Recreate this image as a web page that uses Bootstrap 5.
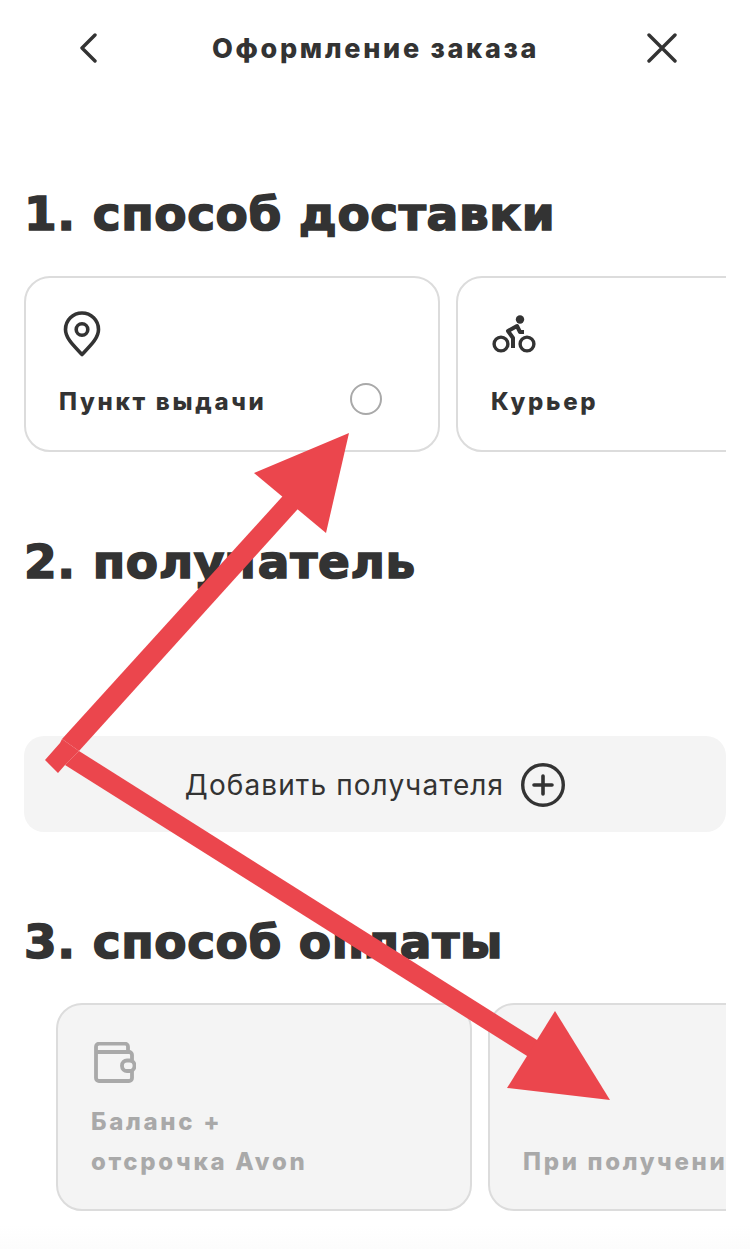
<!DOCTYPE html>
<html lang="ru">

<head>
    <meta charset="UTF-8">
    <meta name="viewport" content="width=device-width, initial-scale=1.0">
    <title>Оформление заказа</title>
    <link href="https://cdn.jsdelivr.net/npm/bootstrap@5.3.0/dist/css/bootstrap.min.css" rel="stylesheet">
    <style>
        html, body {
            height: 100%;
        }

        body {
            font-family: Inter, "Noto Sans", sans-serif;
            color: #333;
            background: #fff;
            overflow: hidden;
        }

        .page-wrap {
            position: relative;
            height: 1249px;
            padding: 0 24px;
            overflow: hidden;
        }

        .top-bar {
            height: 96px;
            padding: 0 48px 0 55px;
        }

        .top-title {
            font-size: 27px;
            font-weight: 800;
            line-height: 1;
            letter-spacing: 2.7px;
            margin-left: 6px;
        }

        .step-title {
            font-family: "DejaVu Sans", sans-serif;
            font-size: 47px;
            font-weight: 700;
            line-height: 56px;
            margin: 0;
            letter-spacing: .6px;
            -webkit-text-stroke: 1.6px #333;
        }

        .step-one {
            margin-top: 90px;
        }

        .step-two {
            margin-top: 82px;
        }

        .step-three {
            margin-top: 82px;
        }

        .card-row {
            gap: 16px;
            margin-top: 34px;
            overflow: hidden;
        }

        .pay-row {
            padding-left: 32px;
            margin-top: 33px;
        }

        .option-box {
            flex: 0 0 416px;
            height: 176px;
            border: 2px solid #dcdcdc;
            border-radius: 26px;
            padding: 32px 33px 0;
            position: relative;
        }

        .pay-row .option-box {
            height: 208px;
            background: #f4f4f4;
            color: #a9a9a9;
        }

        .option-label {
            font-size: 24px;
            font-weight: 800;
            line-height: 40px;
            letter-spacing: 2.7px;
            white-space: nowrap;
        }

        .radio-ring {
            position: absolute;
            right: 56px;
            top: 105px;
            width: 32px;
            height: 32px;
            border: 2px solid #a9a9a9;
            border-radius: 50%;
        }

        .add-btn {
            height: 96px;
            margin-top: 146px;
            border-radius: 20px;
            background: #f4f4f4;
            font-size: 28px;
            letter-spacing: 1.1px;
            gap: 17px;
            padding-top: 2px;
        }

        .arrow-layer {
            position: absolute;
            left: 0;
            top: 0;
            pointer-events: none;
        }

        .bottom-fade {
            position: absolute;
            left: 0;
            right: 0;
            bottom: 0;
            height: 24px;
            background: linear-gradient(to bottom, #fff, #fcfcfc);
        }
    </style>
</head>

<body>
    <div class="page-wrap">
        <!-- Header -->
        <div class="top-bar d-flex align-items-center justify-content-between">
            <svg width="20" height="30" viewBox="0 0 20 30" fill="none" stroke="#333" stroke-width="3.4" stroke-linecap="round" stroke-linejoin="round">
                <path d="M16 2 3 15 16 28" />
            </svg>
            <div class="top-title">Оформление заказа</div>
            <svg width="32" height="30" viewBox="0 0 32 30" fill="none" stroke="#333" stroke-width="3.4" stroke-linecap="round">
                <path d="M3 2 29 28M29 2 3 28" />
            </svg>
        </div>

        <!-- Delivery -->
        <h2 class="step-title step-one">1. способ доставки</h2>
        <div class="card-row d-flex">
            <div class="option-box flex-shrink-0">
                <svg class="d-block" width="38" height="46" viewBox="0 0 38 46" fill="none" stroke="#333" stroke-width="3.6" style="margin:1px 0 0 4px">
                    <path d="M19 43.5C10 34 2.5 27 2.5 18.5a16.500 16.500 0 0 1 33 0C35.500 27 28 34 19 43.500Z" stroke-linejoin="round" />
                    <circle cx="19" cy="18.500" r="5.800" />
                </svg>
                <div class="option-label" style="margin-top:25px">Пункт выдачи</div>
                <div class="radio-ring"></div>
            </div>
            <div class="option-box flex-shrink-0">
                <svg class="d-block" width="48" height="40" viewBox="0 0 48 40" fill="none" stroke="#333" stroke-width="3.4" style="margin:5px 0 0 -1px">
                    <circle cx="11" cy="29" r="6.900" />
                    <circle cx="37" cy="29" r="6.900" />
                    <circle cx="30" cy="4.500" r="4.200" fill="#333" stroke="none" />
                    <path d="M34 17H30L27 11 18 16 23 23V33" stroke-width="4" stroke-linejoin="round" />
                </svg>
                <div class="option-label" style="margin-top:27px">Курьер</div>
            </div>
        </div>

        <!-- Recipient -->
        <h2 class="step-title step-two">2. получатель</h2>
        <div class="add-btn d-flex align-items-center justify-content-center">
            <span>Добавить получателя</span>
            <svg width="44" height="44" viewBox="0 0 44 44" fill="none" stroke="#333">
                <circle cx="22" cy="22" r="20.300" stroke-width="3.400" />
                <path d="M22 13v18M13 22h18" stroke-width="3.600" stroke-linecap="round" />
            </svg>
        </div>

        <!-- Payment -->
        <h2 class="step-title step-three">3. способ оплаты</h2>
        <div class="card-row pay-row d-flex">
            <div class="option-box flex-shrink-0">
                <svg class="d-block" width="42" height="42" viewBox="0 0 42 42" fill="none" stroke="#a9a9a9" stroke-width="3.800" stroke-linejoin="round" style="margin:5px 0 0 3px">
                    <path d="M34 10V4.700a3 3 0 0 0-3-3H5a3 3 0 0 0-3 3V36a3 3 0 0 0 3 3H35a3 3 0 0 0 3-3V29" />
                    <path d="M38 18V13a3 3 0 0 0-3-3H2" />
                    <rect x="28" y="18.500" width="12.500" height="10.500" rx="5" />
                </svg>
                <div class="option-label" style="margin-top:18px">Баланс +<br>отсрочка Avon</div>
            </div>
            <div class="option-box flex-shrink-0">
                <div class="option-label" style="margin-top:105px">При получении</div>
            </div>
        </div>

        <div class="bottom-fade"></div>

        <!-- Red annotation arrows -->
        <svg class="arrow-layer" width="750" height="1249" viewBox="0 0 750 1249">
            <g fill="#eb464d">
                <polygon points="62,739 291,487 306,500 79,751" />
                <polygon points="349,433 254,473 326,533" />
                <polygon points="45,760 60,743 62,739 79,751 65,765 58,773" />
                <polygon points="79,751 545,1045 535,1061 65,765" />
                <polygon points="610,1100 555,1011 507,1088" />
            </g>
        </svg>
    </div>

    <script src="https://cdn.jsdelivr.net/npm/bootstrap@5.3.0/dist/js/bootstrap.bundle.min.js"></script>
</body>

</html>
